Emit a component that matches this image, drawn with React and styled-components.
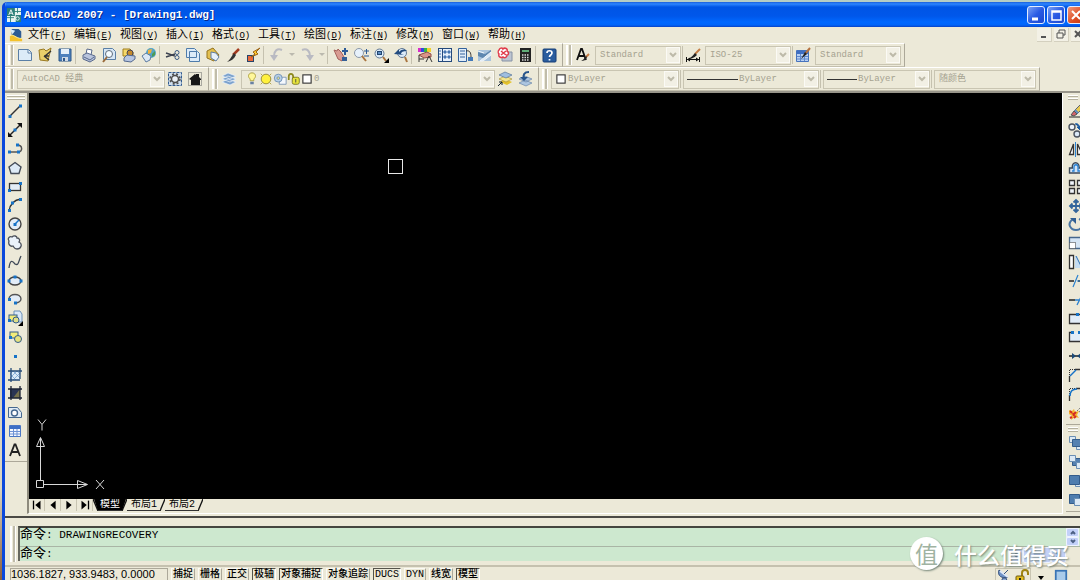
import styled, { createGlobalStyle, css } from "styled-components"

const icons = {
    app: <><rect width="16" height="16" fill="#e8f4f0"/><path d="M0 0h9v9H0zM10 8h6v8h-6z" fill="#2c7f78"/><path d="M2 8l2.500-6 2.500 6M3 6h3" stroke="#fff" fill="none"/><path d="M0 11h8M8 4h8M4 9v7M12 0v6" stroke="#2c7f78"/><circle cx="12" cy="12" r="2" fill="none" stroke="#fff"/></>,
    dwg: <><path d="M3 1h8l3 3v9H3z" fill="#2d5c93"/><path d="M1 1l6 2-3 4z" fill="#d8ecf8"/><path d="M1 9c4-4 6 3 14 3v3H1z" fill="#f4c22c"/><path d="M1 9c4-3 6 3 14 3" stroke="#fff3a8" fill="none"/></>,
    new: <><path d="M1.500 2.500h10l3 3v8h-13z" fill="#dcebf8" stroke="#5a7fa6"/><path d="M11 3v3h3" fill="#fff" stroke="#5a7fa6"/></>,
    open: <><path d="M2 3l5-1 2 2 5-3-3 13-8-1z" fill="#e9cf6a" stroke="#9a7a22"/><path d="M8 9l6-5M7 9l5 4M7 9h5" stroke="#333" strokeWidth="1.500"/></>,
    save: <><path d="M2 2h12v12H2z" fill="#4f81bd" stroke="#2d5688"/><path d="M4 2h8v5H4z" fill="#e6f0fa"/><path d="M5 10h6v4H5z" fill="#cfd9e6"/><path d="M6 11h2v3H6z" fill="#2d5688"/></>,
    print: <><path d="M5 7l1-5 5 1-1 5" fill="#fff" stroke="#59698c"/><path d="M2 8l4-2 8 3v3l-5 3-7-3z" fill="#b9c4dd" stroke="#59698c"/><path d="M3 10l6 3 4-3" stroke="#59698c" fill="none"/></>,
    preview: <><path d="M2.500 1.500h9l3 3v8h-12z" fill="#d7e7f6" stroke="#5a7fa6"/><circle cx="8" cy="7" r="3.500" fill="#f5fbff" stroke="#5c6b7c"/><path d="M6 10l-4 5" stroke="#9a6a3a" strokeWidth="2"/></>,
    publish: <><path d="M2 2h7l3 3v4H2z" fill="#f5d96a" stroke="#a07c1c"/><circle cx="9" cy="6" r="3" fill="#c58a2c" stroke="#445"/><path d="M3 11l3-3 8 1v3l-4 3-7-1z" fill="#b7c6e2" stroke="#54698f"/></>,
    globe: <><circle cx="10" cy="6" r="5" fill="#54a4c6"/><path d="M7 3l4-1-1 4-3 1z" fill="#f4b13c"/><path d="M11 7l3-3v4l-3 2z" fill="#4e9b50"/><path d="M1 9l4-3 5 3-1 4-4 2z" fill="#dce8f5" stroke="#5c7ba0"/></>,
    cut: <><path d="M1 6l9 3M1 10l9-3" stroke="#3c4250" strokeWidth="1.500"/><circle cx="12" cy="5.500" r="2" fill="none" stroke="#3c5a84"/><circle cx="12" cy="10.500" r="2" fill="none" stroke="#3c5a84"/></>,
    copy: <path d="M1.500 1.500h8l2 2v7h-10zM4.500 4.500h8l2 2v8h-10z" fill="#dcebf8" stroke="#4f7cab"/>,
    paste: <><path d="M2 4l6-3 6 7-5 6-7-3z" fill="#e3c050" stroke="#94721d"/><path d="M6 5l5 1 3 4-3 4-5-3z" fill="#e7f0fb" stroke="#5f7da4"/></>,
    brush: <><path d="M14 2L8 8" stroke="#a33a20" strokeWidth="2.500"/><path d="M9 6l2 2c-2 4-5 6-9 7 3-2 4-5 7-9z" fill="#333"/></>,
    blockEdit: <><rect x="2.500" y="8.500" width="6" height="6" fill="#e8683c" stroke="#26456b"/><path d="M15 1L8 5l2 2-4 3 7-3-2-2z" fill="#ffcb2d" stroke="#9a641a"/></>,
    undo: <><path d="M13 3c-5-2-8 1-8 6" fill="none" stroke="#b9bac2" strokeWidth="2"/><path d="M1 8h8l-4 6z" fill="#b9bac2"/></>,
    redo: <><path d="M3 3c5-2 8 1 8 6" fill="none" stroke="#b9bac2" strokeWidth="2"/><path d="M7 8h8l-4 6z" fill="#b9bac2"/></>,
    pan: <><path d="M1 3l3 1 1-2 3 3 3 5-2 4-4-2z" fill="#d99b92" stroke="#a4605b"/><path d="M12 1v7M9 4h6" stroke="#2d5b97" strokeWidth="2"/><path d="M9 10h5v4H9z" fill="#355f97"/></>,
    zoomRt: <><circle cx="6" cy="6" r="4.500" fill="#e7f1fb" stroke="#8a97a8"/><path d="M9 9l4 5" stroke="#a9743f" strokeWidth="2"/><path d="M11 4h5M13.500 2v5M11 9h5" stroke="#2d5b97"/></>,
    zoomWin: <><circle cx="6.500" cy="6.500" r="4.500" fill="#dcebf9" stroke="#637892"/><rect x="4.500" y="4.500" width="4" height="3" fill="#5f8dc1" stroke="#23466f"/><path d="M10 10l3 4" stroke="#a9743f" strokeWidth="2"/><path d="M16 11v5h-5z" fill="#000"/></>,
    zoomPrev: <><circle cx="9" cy="6" r="4.500" fill="#dcebf9" stroke="#637892"/><path d="M12 10l2 5" stroke="#a9743f" strokeWidth="2"/><path d="M1 7l5-5v3c3-3 6-3 8-1-4 0-6 1-6 3l3 1z" fill="#234c80"/></>,
    properties: <><path d="M1 1h3v4H1z" fill="#d72ec8"/><path d="M4 1h3v4H4z" fill="#3249dc"/><path d="M7 1h3v4H7z" fill="#32b64c"/><path d="M10 1h4v4h-4z" fill="#f2d12d"/><path d="M2 8l8-3 4 2v3l-7 1z" fill="#db9488" stroke="#8d4c46"/><path d="M2 8v7M2 12h5M9 15l3-6 3 6" stroke="#333" fill="none"/></>,
    design: <><rect x="1.500" y="1.500" width="13" height="13" fill="#e7f0fa" stroke="#24497c"/><path d="M5.500 2v12" stroke="#24497c"/><path d="M2 4h2M2 7h2M2 10h2M7 4h2v2H7zM11 4h2v2h-2zM7 9h2v2H7zM11 9h2v2h-2z" stroke="#3669a8" fill="#7ba1cd"/></>,
    palette: <><path d="M1.500 1.500h8v13h-8z" fill="#e0ecf8" stroke="#34629c"/><path d="M3 4h5M3 7h5M3 10h5" stroke="#34629c"/><path d="M9 4c4-1 5 2 5 6" fill="none" stroke="#333"/><path d="M11 10h5v4h-5z" fill="#4379b9"/></>,
    sheet: <><path d="M1 3h13v11H1z" fill="#a9c3dc"/><path d="M1 5l7 2 6-4v3l-6 6-7-3z" fill="#5e87b0"/><path d="M1 4l6 2M3 14l11-9v3l-8 6z" fill="#dbe8f3" stroke="#edf4fb"/></>,
    markup: <><path d="M5 5h10v9H5z" fill="#bdc5d2" stroke="#8692a5"/><path d="M2 3c1-3 4-2 4-1 2-2 5 0 4 2 2 1 2 4 0 4 0 3-3 3-4 2-2 1-5 0-4-3-1-1-1-3 0-4z" fill="#fff" stroke="#e13b4b" strokeWidth="1.500"/><path d="M4 4l5 4M9 4L4 8" stroke="#e13b4b" strokeWidth="1.500"/></>,
    calc: <><rect x="3" y="1" width="11" height="14" fill="#222"/><path d="M5 3h7v2H5z" fill="#62ad79"/><path d="M5 8h7M5 10.500h7M5 13h7" stroke="#dadada" strokeWidth="1.500" strokeDasharray="1.500 1"/></>,
    help: <><rect x="2" y="2" width="13" height="13" rx="1" fill="#2a5d9e" stroke="#163e76"/><path d="M6 6c0-3 5-3 5 0 0 2-2.500 2-2.500 4M8.500 12v1.500" fill="none" stroke="#fff" strokeWidth="1.700"/></>,
    textStyle: <><path d="M2 13L6 2h1l4 11M4 9h5" fill="none" stroke="#111" strokeWidth="1.800"/><path d="M14 7l-3 3" stroke="#c97c44" strokeWidth="2"/><path d="M11 9l1 1c-1 3-3 4-6 4 3-1 3-3 5-5z" fill="#222"/></>,
    dimStyle: <><path d="M15 2l-5 5" stroke="#c47c45" strokeWidth="2"/><path d="M10 6l2 2c-3 3-6 4-11 5 4-2 6-3 9-7z" fill="#222"/><path d="M1.500 10v5M14.500 10v5M2 12.500h12" stroke="#111"/><path d="M2 12.500l3-2v4zM14 12.500l-3-2v4z" fill="#111"/></>,
    tableStyle: <><path d="M1.500 3.500h12v11h-12z" fill="#b9d0f2" stroke="#4673bd"/><path d="M2 4h11v3H2z" fill="#3f6fc2"/><path d="M2 9.500h11M2 12h11M5.500 7v7M9.500 7v7" stroke="#5f88cc"/><path d="M15 1l-5 6" stroke="#b4713f" strokeWidth="2"/><path d="M10 5l2 2-6 5z" fill="#222"/></>,
    gear: <><path d="M1.500 1.500h13v13h-13z" fill="#cfdeee" stroke="#315b91" strokeDasharray="3 1"/><circle cx="8" cy="8" r="3.500" fill="#e9eff5" stroke="#4c4c4c" strokeWidth="1.500"/><circle cx="8" cy="8" r="5" fill="none" stroke="#4c4c4c" strokeWidth="1.500" strokeDasharray="2 2"/></>,
    home: <><path d="M1.500 1.500h13v13h-13z" fill="none" stroke="#666" strokeDasharray="1 1"/><path d="M2 8l6-5 1 1V3h3v3l2 2v1h-1v5H4V9z" fill="#171717"/></>,
    layers: <path d="M1 11l6-3 8 3-6 3zM1 8l6-3 8 3-6 3zM1 5l6-3 8 3-6 3z" fill="#7ba1cc" stroke="#eef5fc" strokeWidth=".7"/>,
    bulb: <><path d="M8 1c4 0 5 4 3 6-1 1-1 2-1 3H6c0-1 0-2-1-3C3 5 4 1 8 1z" fill="#fff79a" stroke="#a99b36"/><path d="M6 11h4v3H6z" fill="#6881a4"/></>,
    sun: <><circle cx="8" cy="8" r="5.500" fill="#fff13d" stroke="#8f8434"/><path d="M2 2l2 2M14 2l-2 2M2 14l2-2M14 14l-2-2" stroke="#a99b3a"/></>,
    freeze: <><path d="M8 6h7v8H7z" fill="#f4f8fd" stroke="#7c95b4"/><circle cx="6" cy="7" r="4.500" fill="#b8d0e6" stroke="#6d8fb5"/><circle cx="6" cy="7" r="1.500" fill="#f0e88a" stroke="#6d8fb5"/></>,
    lock: <><path d="M2 9V5c0-4 5-4 5 0v3" stroke="#8e8a21" strokeWidth="2" fill="none"/><rect x="6" y="6" width="8" height="8" rx="2" fill="#e7e43d" stroke="#77741f"/><path d="M10 8v4" stroke="#444"/></>,
    swatch: <rect x="2.500" y="2.500" width="11" height="11" fill="#fff" stroke="#333" strokeWidth="1.500"/>,
    layerCurrent: <><path d="M3 11l5-3 7 3-5 3z" fill="#e4c22b"/><path d="M2 8l6-3 7 3-6 3z" fill="#f4e58b" stroke="#a08a31" strokeWidth=".6"/><path d="M2 4l6-3 7 3-6 3z" fill="#9fbedf" stroke="#45678e" strokeWidth=".6"/><path d="M1 15l4-4M2 11h3v3" stroke="#123" fill="none"/></>,
    layerPrev: <><path d="M2 12l6-3 7 3-6 3zM2 8l6-3 7 3-6 3z" fill="#acc5e0" stroke="#5c7ba1" strokeWidth=".6"/><path d="M12 1C7 1 6 4 7 7" fill="none" stroke="#28558c" strokeWidth="2"/><path d="M3 6l4 4 4-4z" fill="#28558c"/></>,
    line: <><path d="M3 13L13 3" stroke="#333" strokeWidth="1.500"/><path d="M1.500 12h3v3h-3zM12 1.500h3v3h-3z" fill="#1673c7"/></>,
    xline: <><path d="M2 14L14 2" stroke="#222" strokeWidth="1.500"/><path d="M1 15v-5l5 5zM15 1v5l-5-5z" fill="#111"/><path d="M6.500 6.500h3v3h-3z" fill="#1673c7"/></>,
    pline: <><path d="M3 11h8M10 4c6 0 6 7 1 7" fill="none" stroke="#555" strokeWidth="1.500"/><path d="M1 9.500h3v3H1zM9 2.500h3v3H9zM10 9.500h3v3h-3z" fill="#1673c7"/></>,
    polygon: <path d="M8 2.500l6 4.500-2 6.500H4L2 7z" fill="#deebf7" stroke="#454d59" strokeWidth="1.400"/>,
    rect: <><rect x="2.500" y="4.500" width="11" height="7" fill="#e3edf7" stroke="#333" strokeWidth="1.300"/><path d="M1 10h3v3H1zM12 3h3v3h-3z" fill="#1673c7"/></>,
    arc: <><path d="M2 14C3 7 7 3 14 2" fill="none" stroke="#333" strokeWidth="1.300"/><path d="M1 12h3v3H1zM4 4.500h3v3H4zM12 1h3v3h-3z" fill="#1673c7"/></>,
    circle: <><circle cx="8" cy="8" r="6" fill="#e3edf7" stroke="#444" strokeWidth="1.400"/><path d="M8 8l4-4" stroke="#1673c7" strokeWidth="1.500"/><path d="M6.500 7h3v3h-3z" fill="#1673c7"/></>,
    cloud: <path d="M2 6c-2-3 1-5 3-4 2-2 5-1 5 1 3 0 3 3 2 4 4 2 2 7-2 7-3 0-3-2-4-3-3 1-5-2-4-5z" fill="#eaf2fa" stroke="#4c525c" strokeWidth="1.300"/>,
    spline: <path d="M2 14c1-8 3-8 6-4 4 2 3-2 6-8" fill="none" stroke="#3d4856" strokeWidth="1.300"/>,
    ellipse: <><ellipse cx="8" cy="8" rx="6" ry="4" fill="#e3edf7" stroke="#444" strokeWidth="1.400"/><path d="M0.500 6.500h3v3h-3zM12.500 6.500h3v3h-3zM6.500 2.500h3v3h-3z" fill="#1673c7"/></>,
    ellipseArc: <><path d="M2 8c0-6 12-6 12 0 0 3-4 4-6 4" fill="#e3edf7" stroke="#555" strokeWidth="1.400"/><path d="M1 7h3v3H1zM7 10.500h3v3H7z" fill="#1673c7"/></>,
    insert: <><path d="M7 1h6l2 3v8H7z" fill="#d9e9f8" stroke="#6c91b9"/><rect x="2" y="5" width="8" height="6" fill="#f2ec79" stroke="#335c8a"/><circle cx="9" cy="10" r="3" fill="#dede88" stroke="#335c8a"/><path d="M1 9h3v3H1z" fill="#1673c7"/><path d="M16 11v5h-5z"/></>,
    block: <><rect x="3" y="3" width="8" height="6" fill="#f2ec79" stroke="#335c8a"/><circle cx="11" cy="10" r="3.500" fill="#e5e27f" stroke="#335c8a"/><path d="M2 7h3v3H2z" fill="#1673c7"/></>,
    point: <path d="M7 7h3v3H7z" fill="#1673c7"/>,
    hatch: <><rect x="3" y="4" width="10" height="9" fill="#dcebf8"/><path d="M3 7l6 6M3 11l2 2M6 4l7 7M10 4l3 3M3 7l3-3M3 11l7-7M6 13l7-7" stroke="#6a9acb" strokeWidth=".7"/><path d="M1 4h14M1 13h12M4 1v14M13 1v11" stroke="#264c78" strokeWidth="1.300"/></>,
    gradient: <><path d="M3 4h10v9H3z" fill="#293454"/><path d="M13 4v9H6z" fill="#75714c"/><path d="M1 4h14M1 13h14M4 1v14M13 1v14" stroke="#1c2435" strokeWidth="1.300"/></>,
    region: <><path d="M1.500 3.500h9l4 5v5h-13z" fill="#e0ebf5" stroke="#45688f"/><circle cx="7.500" cy="9" r="3" fill="#fff" stroke="#45688f" strokeWidth="1.400"/></>,
    table: <><path d="M2.500 2.500h11v11h-11z" fill="#f4f8ff" stroke="#4a77c4"/><path d="M3 3h10v3H3z" fill="#3d6fc6"/><path d="M3 8.500h10M3 11h10M6.500 6v7M10 6v7" stroke="#6d92d4"/></>,
    mtext: <path d="M3 14L7.500 2.500h1L13 14M4.500 10h7" fill="none" stroke="#222" strokeWidth="1.800"/>,
    erase: <><path d="M1 14h14" stroke="#222"/><path d="M4 12l3-5 6-6 3 3-7 7z" fill="#e8c952" stroke="#5d6470"/><path d="M3 12l3-4 3 3-3 2z" fill="#d3636b" stroke="#555"/><path d="M7 7l3 3" stroke="#5c8cc6" strokeWidth="2"/></>,
    copyObj: <><circle cx="4" cy="5" r="3" fill="#eef5fc" stroke="#4b535f" strokeWidth="1.400"/><circle cx="9" cy="12" r="3" fill="#dbe9f7" stroke="#4b535f" strokeWidth="1.400"/><path d="M7 2c3-1 4 1 5 4M9 5h5l-2 3z" fill="#1b5a9f" stroke="#1b5a9f"/></>,
    mirror: <><path d="M1.500 13.500h4V3zM9.500 13.500h5L9.500 3z" fill="#fff" stroke="#333" strokeWidth="1.300"/><path d="M7.500 1v15" stroke="#2a83d4"/></>,
    offset: <><path d="M1.500 13V8h3C3 1 12 1 11 8h4v5z" fill="#d3e4f5" stroke="#3c4a5b" strokeWidth="1.400"/><path d="M4 11h2V7c0-3 4-3 4 0v4h5" fill="none" stroke="#2a83d4" strokeWidth="1.300"/></>,
    array: <path d="M1.500 1.500h5v5h-5zM9.500 1.500h5v5h-5zM1.500 9.500h5v5h-5zM9.500 9.500h5v5h-5z" fill="#f1f6fc" stroke="#333" strokeWidth="1.300"/>,
    move: <path d="M8 2v12M2 8h12M5.500 4.500L8 2l2.500 2.500M5.500 11.500L8 14l2.500-2.500M4.500 5.500L2 8l2.500 2.500M11.500 5.500L14 8l-2.500 2.500" fill="none" stroke="#34669c" strokeWidth="1.800"/>,
    rotate: <><path d="M5 3c-7 5-2 11 3 11 7 0 8-9 3-11" fill="none" stroke="#4975a3" strokeWidth="2"/><path d="M2 2h6v6z" fill="#315f94"/></>,
    scale: <><path d="M1.500 2.500h14v11h-14z" fill="#d5e5f4" stroke="#45678d" strokeWidth="1.300"/><path d="M1.500 7.500h6v6h-6z" fill="#fff" stroke="#333" strokeDasharray="1 1"/></>,
    stretch: <><path d="M1.500 1.500h4v13h-4z" fill="#fff" stroke="#333" strokeWidth="1.300"/><path d="M7 2h2l5 12H7z" fill="#c5dcf2"/><path d="M8 2l6 12" stroke="#3273b1"/><path d="M5.500 2v12" stroke="#333" strokeDasharray="2 1"/></>,
    trim: <><path d="M1 8h5M10 8h2M13 8h2" stroke="#222" strokeWidth="1.300"/><path d="M5 14L10 2M9 8h6" stroke="#2b82cf" strokeWidth="1.200"/></>,
    extend: <><path d="M1 8h6" stroke="#222" strokeWidth="1.500"/><path d="M7 8h4M9 13l4-8 3-1" stroke="#2b82cf" strokeWidth="1.300" fill="none"/></>,
    breakAt: <><path d="M1.500 3.500h14v9h-14z" fill="#e2edf8" stroke="#333" strokeWidth="1.300"/><path d="M8 2h3v3H8z" fill="#1673c7"/></>,
    break: <><path d="M4 3.500H1.500v9h14v-9H12" fill="#e2edf8" stroke="#333" strokeWidth="1.300"/><path d="M3 2h3v3H3zM10 2h3v3h-3z" fill="#1673c7"/></>,
    join: <><path d="M1 8h14" stroke="#222" strokeWidth="1.500"/><path d="M4 5l4 3-4 3zM13 5L9 8l4 3z" fill="#1b4a79"/></>,
    chamfer: <><path d="M1.500 15V9M7 2.500h8" stroke="#333" strokeWidth="1.300"/><path d="M1.500 8V2.500H7" fill="none" stroke="#333" strokeDasharray="1 1"/><path d="M2 9l6-6" stroke="#1673c7" strokeWidth="1.500"/></>,
    fillet: <><path d="M1.500 15V9M8 2.500h7" stroke="#333" strokeWidth="1.300"/><path d="M1.500 8V2.500H7" fill="none" stroke="#333" strokeDasharray="1 1"/><path d="M2 10c0-5 3-7 7-7" fill="none" stroke="#1673c7" strokeWidth="1.500"/></>,
    explode: <><path d="M1 5l3 1 2-2 1 3 4-1-2 4 2 3-4-1-4 3 1-4-3-2z" fill="#f4b62b"/><path d="M2 6l2 2M8 11l-2 2M8 7L6 9M2 13l2-1M5 8l1 3" stroke="#d42a22" strokeWidth="2"/><path d="M9 6l5-5M11 7l4-3" stroke="#777" strokeDasharray="2 1"/></>,
    front: <><path d="M1.500 1.500h6v6h-6zM8.500 8.500h6v6h-6z" fill="#dce9f5" stroke="#6b8fb4"/><path d="M4.500 4.500h8v7h-8z" fill="#5581b1" stroke="#345c8a"/></>,
    back: <><path d="M4.500 4.500h8v7h-8z" fill="#5581b1" stroke="#345c8a"/><path d="M1.500 1.500h6v6h-6zM8.500 8.500h6v6h-6z" fill="#dce9f5" stroke="#6b8fb4"/></>,
    above: <><path d="M7.500 7.500h7v6h-7z" fill="#dce9f5" stroke="#6b8fb4"/><path d="M1.500 2.500h10v9h-10z" fill="#4f7dae" stroke="#345c8a"/></>,
    under: <><path d="M1.500 2.500h10v9h-10z" fill="#4f7dae" stroke="#345c8a"/><path d="M6.500 6.500h8v7h-8z" fill="#dce9f5" stroke="#6b8fb4"/></>,
    dish: <><path d="M3 1c-2 6 3 9 9 7z" fill="#6f92c6" stroke="#35527f"/><path d="M4 2l8 6" stroke="#dfe9f7" strokeWidth="2"/><path d="M8 5l4-4" stroke="#35527f"/><path d="M7 9l-3 5h8l-2-5z" fill="#8ea9d2" stroke="#35527f"/></>,
    goldLock: <><path d="M8 8V4c0-4 6-4 6 0v2" fill="none" stroke="#a08312" strokeWidth="2"/><rect x="2" y="7" width="8" height="8" rx="1" fill="#e3be1e" stroke="#6f5a10"/><path d="M6 9v4" stroke="#222" strokeWidth="2"/></>,
    screen: <><rect x="1" y="1" width="14" height="14" fill="#3974b5"/><path d="M3 3h10v10H3z" fill="#a9cbea"/></>,
    first: <><path d="M4 3v10" stroke="#000" strokeWidth="1.500"/><path d="M12 3v10L6 8z"/></>,
    prev: <path d="M11 3v10L5 8z"/>,
    next: <path d="M5 3v10l6-5z"/>,
    last: <><path d="M12 3v10" stroke="#000" strokeWidth="1.500"/><path d="M4 3v10l6-5z"/></>,
}

const standardTools = [
    ["new", "open", "save"],
    ["print", "preview", "publish", "globe"],
    ["cut", "copy", "paste", "brush", "blockEdit"],
    ["undo", "drop", "redo", "drop"],
    ["pan", "zoomRt", "zoomWin", "zoomPrev"],
    ["properties", "design", "palette", "sheet", "markup", "calc"],
    ["help"],
]

const drawTools = ["line", "xline", "pline", "polygon", "rect", "arc", "circle", "cloud", "spline", "ellipse", "ellipseArc", "insert", "block", "point", "hatch", "gradient", "region", "table", "mtext"]
const modifyTools = ["erase", "copyObj", "mirror", "offset", "array", "move", "rotate", "scale", "stretch", "trim", "extend", "breakAt", "break", "join", "chamfer", "fillet", "explode"]
const orderTools = ["front", "back", "above", "under"]

const menus = [["文件", "F"], ["编辑", "E"], ["视图", "V"], ["插入", "I"], ["格式", "O"], ["工具", "T"], ["绘图", "D"], ["标注", "N"], ["修改", "M"], ["窗口", "W"], ["帮助", "H"]]

const modes = [["捕捉"], ["栅格"], ["正交"], ["极轴", true], ["对象捕捉", true], ["对象追踪"], ["DUCS", true], ["DYN"], ["线宽"], ["模型", true]]

const Icon = ({ name, size = 16 }) => (
    <StyledIcon viewBox="0 0 16 16" width={size} height={size} aria-hidden="true">{icons[name]}</StyledIcon>
)

const Tool = ({ name }) => (
    <ToolBtn type="button" aria-label={name}><Icon name={name}/></ToolBtn>
)

const Combo = ({ label, value, width, children }) => (
    <ComboBox $width={width}>
        {children}
        <select aria-label={label} defaultValue={value}>
            <option>{value}</option>
        </select>
        <Arrow>
            <svg width="8" height="6" viewBox="0 0 8 6"><path d="M1 1l3 3 3-3" fill="none" stroke="#bdbaa9" strokeWidth="2"/></svg>
        </Arrow>
    </ComboBox>
)

const LineSample = ({ width }) => (
    <svg width={width} height="1"><path d={`M0 .5h${width}`} stroke="#333"/></svg>
)

const Slash = ({ back }) => (
    <SlashMark width="5" height="12" viewBox="0 0 5 12">
        <path d={back ? "M0 0l5 12" : "M5 0L0 12"} stroke="#111" strokeWidth="1.300"/>
    </SlashMark>
)

const TitleBar = () => (
    <StyledTitleBar>
        <Icon name="app" size={14}/>
        <h1>AutoCAD 2007 - [Drawing1.dwg]</h1>
        <CaptionBtn type="button" aria-label="最小化">
            <svg width="16" height="16"><path d="M4 12h6" stroke="#fff" strokeWidth="3"/></svg>
        </CaptionBtn>
        <CaptionBtn type="button" aria-label="最大化">
            <svg width="16" height="16"><path d="M4 4h9v9H4zM4 5h9" fill="none" stroke="#fff" strokeWidth="1.500"/></svg>
        </CaptionBtn>
        <CaptionBtn type="button" aria-label="关闭" $close>
            <svg width="16" height="16"><path d="M4 4l8 8M12 4l-8 8" stroke="#fff" strokeWidth="2"/></svg>
        </CaptionBtn>
    </StyledTitleBar>
)

const MenuBar = () => (
    <StyledMenuBar>
        <Icon name="dwg" size={14}/>
        {menus.map(([text, key]) => (
            <MenuBtn type="button" key={key}>{text}<span>(<u>{key}</u>)</span></MenuBtn>
        ))}
        <ChildBtns>
            <button type="button" aria-label="最小化窗口"><svg width="12" height="12"><path d="M3 9h5" stroke="#555" strokeWidth="2"/></svg></button>
            <button type="button" aria-label="还原窗口"><svg width="12" height="12"><path d="M2 5h6v5H2zM4 5V2h6v5H8" fill="none" stroke="#555"/></svg></button>
            <button type="button" aria-label="关闭窗口"><svg width="12" height="12"><path d="M3 3l6 6M9 3L3 9" stroke="#555" strokeWidth="2"/></svg></button>
        </ChildBtns>
    </StyledMenuBar>
)

const ToolRows = () => (
    <>
        <ToolRow>
            <ToolBar>
                <Grip/>
                {standardTools.map((group, i) => (
                    <Group key={i}>
                        {group.map((name, j) => name === "drop"
                            ? <DropBtn type="button" aria-label="历史" key={j}><svg width="6" height="4"><path d="M0 0h6L3 3z" fill="#bbb9ae"/></svg></DropBtn>
                            : <Tool name={name} key={name}/>)}
                    </Group>
                ))}
            </ToolBar>
            <ToolBar>
                <Grip/>
                <Tool name="textStyle"/>
                <Combo label="文字样式" value="Standard" width={86}/>
                <Divider/>
                <Tool name="dimStyle"/>
                <Combo label="标注样式" value="ISO-25" width={86}/>
                <Divider/>
                <Tool name="tableStyle"/>
                <Combo label="表格样式" value="Standard" width={86}/>
            </ToolBar>
        </ToolRow>
        <ToolRow>
            <ToolBar>
                <Grip/>
                <Combo label="工作空间" value="AutoCAD 经典" width={148}/>
                <Tool name="gear"/>
                <Tool name="home"/>
            </ToolBar>
            <ToolBar>
                <Grip/>
                <Tool name="layers"/>
                <Combo label="图层" value="0" width={254}>
                    <Icon name="bulb" size={14}/>
                    <Icon name="sun" size={14}/>
                    <Icon name="freeze" size={14}/>
                    <Icon name="lock" size={14}/>
                    <Icon name="swatch" size={12}/>
                </Combo>
                <Tool name="layerCurrent"/>
                <Tool name="layerPrev"/>
            </ToolBar>
            <ToolBar>
                <Grip/>
                <Combo label="颜色" value="ByLayer" width={128}><Icon name="swatch" size={12}/></Combo>
                <Divider/>
                <Combo label="线型" value="ByLayer" width={136}><LineSample width={51}/></Combo>
                <Divider/>
                <Combo label="线宽" value="ByLayer" width={107}><LineSample width={30}/></Combo>
                <Divider/>
                <Combo label="打印样式" value="随颜色" width={102}/>
            </ToolBar>
        </ToolRow>
    </>
)

const ModelSpace = () => (
    <StyledModelSpace>
        <Drawing>
            <PickBox/>
            <UcsIcon width="80" height="80" viewBox="1 1 80 80" aria-hidden="true">
                <g fill="none" stroke="#d8d8d8">
                    <path d="M8.500 62.500h7v7h-7zM12.500 62V20M16 66.500h40"/>
                    <path d="M12.500 19.500l-4 9h8zM12.500 20v9M59.500 66.500l-10-4v8zM50 66.500h9"/>
                    <path d="M10 1.500l4 5 4-5M14 6.500v6M68 62l8 9M76 62l-8 9"/>
                </g>
            </UcsIcon>
        </Drawing>
        <TabBar>
            {["first", "prev", "next", "last"].map(name => (
                <NavBtn type="button" aria-label={name} key={name}><Icon name={name} size={14}/></NavBtn>
            ))}
            <Slash back/>
            <TabBtn type="button" $active>模型</TabBtn>
            <Slash/>
            <TabBtn type="button">布局1</TabBtn>
            <Slash/>
            <TabBtn type="button">布局2</TabBtn>
            <Slash/>
        </TabBar>
    </StyledModelSpace>
)

const CommandPanel = () => (
    <StyledCommandPanel>
        <Grip/>
        <CommandBox>
            <History>
                <p><span>命令</span>: DRAWINGRECOVERY</p>
                <Scroller>
                    <ScrollBtn type="button" aria-label="向上"><svg width="8" height="5"><path d="M2 4l2-2 2 2" fill="none" stroke="#4d6185" strokeWidth="2"/></svg></ScrollBtn>
                    <ScrollBtn type="button" aria-label="向下"><svg width="8" height="5"><path d="M2 1l2 2 2-2" fill="none" stroke="#4d6185" strokeWidth="2"/></svg></ScrollBtn>
                </Scroller>
            </History>
            <Prompt>
                <label htmlFor="command"><span>命令</span>:</label>
                <input id="command" type="text"/>
                <HScroller>
                    <ScrollBtn type="button" aria-label="向左"><svg width="5" height="8"><path d="M4 2L2 4l2 2" fill="none" stroke="#4d6185" strokeWidth="2"/></svg></ScrollBtn>
                    <ScrollBtn type="button" aria-label="滚动块"><svg width="8" height="8"><path d="M2 2v4M4 2v4M6 2v4" stroke="#8fa6dc"/></svg></ScrollBtn>
                    <ScrollBtn type="button" aria-label="向右"><svg width="5" height="8"><path d="M1 2l2 2-2 2" fill="none" stroke="#4d6185" strokeWidth="2"/></svg></ScrollBtn>
                </HScroller>
            </Prompt>
        </CommandBox>
    </StyledCommandPanel>
)

const StatusBar = () => (
    <StyledStatusBar>
        <Coords>1036.1827, 933.9483, 0.0000</Coords>
        {modes.map(([text, on]) => (
            <ModeBtn type="button" key={text} $on={on} aria-pressed={!!on}>{text}</ModeBtn>
        ))}
        <Tray>
            <Icon name="dish"/>
            <Icon name="goldLock"/>
        </Tray>
        <svg width="8" height="5"><path d="M1 0h6L4 4z"/></svg>
        <Icon name="screen" size={14}/>
    </StyledStatusBar>
)

const Watermark = () => (
    <StyledWatermark>
        <span>值</span>
        <p>什么值得买</p>
    </StyledWatermark>
)

const App = () => {
    return (
        <Desktop>
            <GlobalStyle/>
            <Frame>
                <TitleBar/>
                <MenuBar/>
                <ToolRows/>
                <Workspace>
                    <SideColumn>
                        <SideBar>
                            <SideGrip/>
                            <SideTools $height={357}>{drawTools.map(name => <Tool name={name} key={name}/>)}</SideTools>
                        </SideBar>
                    </SideColumn>
                    <ModelSpace/>
                    <SideColumn $right>
                        <SideBar>
                            <SideGrip/>
                            <SideTools $height={320}>{modifyTools.map(name => <Tool name={name} key={name}/>)}</SideTools>
                        </SideBar>
                        <SideBar>
                            <SideGrip/>
                            <SideTools $height={75}>{orderTools.map(name => <Tool name={name} key={name}/>)}</SideTools>
                        </SideBar>
                    </SideColumn>
                </Workspace>
                <CommandPanel/>
                <StatusBar/>
            </Frame>
            <Watermark/>
        </Desktop>
    )
}

export default App

const GlobalStyle = createGlobalStyle`
    *{
        box-sizing: border-box;
        margin: 0;
        padding: 0;
    }

    body{
        overflow: hidden;
        font-family: "Liberation Mono", "Noto Sans CJK SC", monospace;
        font-size: 11px;
        color: #000;
    }

    button,input,select{
        border: none;
        border-radius: 0;
        background: none;
        font: inherit;
        color: inherit;
    }
`

const Desktop = styled.div`
    position: relative;
    height: 100vh;
    padding: 2px 0px 0px 2px;
    overflow: hidden;
    background: linear-gradient(to bottom, #b5cdc4, #d9d5c3 30px, #d9d5c3 84%, #8c5e3c);
`

const Frame = styled.main`
    display: flex;
    flex-direction: column;
    height: 100%;
    border-left: 3px solid #0a48dc;
    border-top-left-radius: 5px;
    background-color: #ece9d8;
    overflow: hidden;
`

const StyledIcon = styled.svg`
    display: block;
    flex: none;
`

const StyledTitleBar = styled.header`
    display: flex;
    align-items: center;
    flex: none;
    height: 25px;
    padding-left: 2px;
    background: linear-gradient(to bottom, #1a5fdc, #2d86ff 2px, #0055e5 5px, #0057ea 14px, #0068ff 20px, #0065fa 23px, #0a42c4);

    h1{
        flex: 1;
        padding-left: 3px;
        font-size: 11px;
        font-weight: bold;
        color: #fff;
        text-shadow: 1px 1px #06298c;
    }
`

const CaptionBtn = styled.button`
    display: flex;
    flex: none;
    width: 18px;
    height: 18px;
    margin-right: 2px;
    border: 1px solid #e2ecff;
    border-radius: 3px;
    background: ${({ $close }) => $close
        ? "linear-gradient(135deg, #f09a7c, #dd4b22 60%, #c63a12)"
        : "linear-gradient(135deg, #7ba2f5, #2a5be4 50%, #1c46cf)"};

    &:last-child{
        margin-right: -5px;
    }
`

const StyledMenuBar = styled.nav`
    display: flex;
    align-items: center;
    flex: none;
    height: 16px;
    padding-left: 4px;
`

const MenuBtn = styled.button`
    width: 46px;
    padding-left: 5px;
    font-size: 11px;
    line-height: 16px;
    text-align: left;
    white-space: nowrap;

    span{
        font-size: 9px;
    }
`

const ChildBtns = styled.div`
    display: flex;
    gap: 2px;
    margin: 0px -6px 0px auto;

    button{
        width: 15px;
        height: 14px;
        border-right: 1px solid #d4d0bf;
        border-bottom: 1px solid #d4d0bf;
        background-color: #f3f1e6;
    }
`

const ToolRow = styled.div`
    display: flex;
    flex: none;
    height: 24px;
    margin-right: 2px;
`

const ToolBar = styled.div`
    display: flex;
    align-items: center;
    flex: none;
    padding: 0px 3px;
    border-top: 1px solid #fff;
    border-right: 1px solid #aca899;
    border-bottom: 1px solid #c3bfad;
`

const Grip = styled.div`
    flex: none;
    width: 5px;
    height: 20px;
    margin-right: 2px;
    border: 0px solid #fff;
    border-width: 0px 2px;
    border-right-color: #c0bcaa;
    box-shadow: 1px 0px #fff;
`

const SideGrip = styled.div`
    height: 5px;
    margin: 2px 2px;
    border-top: 1px solid #fff;
    border-bottom: 1px solid #b5b19f;
    background: linear-gradient(to bottom, #b5b19f 1px, #ece9d8 1px, #ece9d8 2px, #fff 2px);
`

const Group = styled.div`
    display: flex;
    align-items: center;

    & + &{
        padding-left: 3px;
        border-left: 1px solid #c5c1af;
    }
`

const ToolBtn = styled.button`
    display: flex;
    align-items: center;
    justify-content: center;
    flex: none;
    width: 20px;
    height: 18px;
`

const DropBtn = styled.button`
    display: flex;
    align-items: center;
    justify-content: center;
    width: 10px;
    height: 18px;
`

const Divider = styled.i`
    width: 1px;
    height: 18px;
    margin: 0px 0px 0px 1px;
    background-color: #c5c1af;
`

const ComboBox = styled.div`
    display: flex;
    align-items: center;
    width: ${({ $width }) => $width}px;
    height: 19px;
    margin-left: 2px;
    padding-left: 3px;
    border: 1px solid #c9c5b2;

    select{
        flex: 1;
        min-width: 0;
        padding-left: 1px;
        appearance: none;
        font-size: 9px;
        line-height: 14px;
        color: #a5a290;
    }

    svg{
        flex: none;
    }
`

const Arrow = styled.span`
    display: flex;
    align-items: center;
    justify-content: center;
    width: 14px;
    height: 16px;
    border: 1px solid #fbfaf5;
    background-color: #f2f0e5;
    pointer-events: none;
`

const Workspace = styled.section`
    display: flex;
    flex: 1;
    min-height: 0;
    border-top: 2px solid #98958a;
`

const SideColumn = styled.aside`
    flex: none;
    width: ${({ $right }) => $right ? 15 : 22}px;
    margin-left: ${({ $right }) => $right ? 2 : 0}px;
    padding-left: ${({ $right }) => $right ? 1 : 0}px;
`

const SideBar = styled.div`
    padding-bottom: 2px;
    border-bottom: 1px solid #aca899;
`

const SideTools = styled.div`
    display: flex;
    flex-direction: column;
    height: ${({ $height }) => $height}px;

    button{
        flex: 1;
        min-height: 0;
    }
`

const StyledModelSpace = styled.div`
    display: flex;
    flex: 1;
    flex-direction: column;
    min-width: 0;
    border-left: 2px solid #8e8b7d;
    border-right: 1px solid #fff;
    border-bottom: 1px solid #fff;
`

const Drawing = styled.div`
    position: relative;
    flex: 1;
    background-color: #000;
`

const PickBox = styled.div`
    position: absolute;
    left: 359px;
    top: 66px;
    width: 15px;
    height: 15px;
    border: 1px solid #e8e8e8;
`

const UcsIcon = styled.svg`
    position: absolute;
    left: 0px;
    bottom: 0px;
`

const TabBar = styled.div`
    display: flex;
    flex: none;
    height: 14px;
    padding-bottom: 2px;
`

const NavBtn = styled.button`
    display: flex;
    align-items: center;
    justify-content: center;
    width: 16px;
    height: 12px;
    border-right: 1px solid #c9c5b2;
`

const SlashMark = styled.svg`
    flex: none;
`

const TabBtn = styled.button`
    height: 12px;
    padding: 0px 3px 0px 4px;
    border-bottom: 1px solid #333;
    font-size: 10px;
    line-height: 11px;

    ${({ $active }) => $active && css`
        margin: 0px -4px;
        padding: 0px 6px;
        background-color: #000;
        color: #fff;
        clip-path: polygon(0 0, 100% 0, calc(100% - 4px) 100%, 4px 100%);
    `}
`

const StyledCommandPanel = styled.section`
    display: flex;
    flex: none;
    height: 51px;
    margin-top: 2px;
    padding: 8px 0px 4px 5px;
    border-top: 2px solid #4b4a45;
    border-bottom: 2px solid #c5c1af;

    & > div:first-child{
        height: 36px;
        margin-right: 3px;
    }
`

const CommandBox = styled.div`
    flex: 1;
    border-top: 2px solid #45463f;
    border-left: 2px solid #66675e;
    background-color: #cde8cf;
    font-size: 11px;

    span{
        font-size: 13px;
    }
`

const History = styled.div`
    display: flex;
    height: 19px;
    border-bottom: 1px solid #a9b5a5;

    p{
        flex: 1;
        line-height: 14px;
    }
`

const Prompt = styled.div`
    display: flex;
    height: 16px;

    label{
        line-height: 14px;
    }

    input{
        flex: 1;
        outline: none;
    }
`

const Scroller = styled.div`
    display: flex;
    flex-direction: column;
    width: 13px;
    margin-right: 1px;
    background-color: #eef0fb;
`

const HScroller = styled.div`
    display: flex;
    width: 72px;
    padding-right: 14px;
    background-color: #ece9d8;

    button:nth-child(2){
        flex: 2;
    }
`

const ScrollBtn = styled.button`
    display: flex;
    flex: 1;
    align-items: center;
    justify-content: center;
    border: 1px solid #eef3ff;
    border-radius: 2px;
    background-color: #c3d1f9;
`

const StyledStatusBar = styled.footer`
    display: flex;
    gap: 3px;
    flex: none;
    height: 13px;
    padding: 1px 9px 0px 5px;

    & > svg{
        flex: none;
        margin: 1px 3px 0px;
    }

    & > svg:nth-last-child(2){
        margin-top: 8px;
    }
`

const Coords = styled.output`
    width: 158px;
    height: 12px;
    border: 1px solid #aca899;
    border-bottom: none;
    font-family: "Liberation Sans", sans-serif;
    font-size: 11px;
    line-height: 11px;
`

const ModeBtn = styled.button`
    flex: none;
    height: 12px;
    padding: 0px 1px;
    border: 1px solid ${({ $on }) => $on ? "#55534a" : "#fbfaf4"};
    border-right-color: ${({ $on }) => $on ? "#fff" : "#aca899"};
    border-bottom: none;
    font-size: 10px;
    font-weight: 500;
    line-height: 11px;
`

const Tray = styled.div`
    display: flex;
    flex: none;
    gap: 2px;
    height: 18px;
    margin-left: auto;
    border: 1px solid #c9c5b2;
`

const StyledWatermark = styled.div`
    position: absolute;
    right: 11px;
    bottom: 10px;
    display: flex;
    align-items: center;
    gap: 11px;
    font-family: "Noto Sans CJK SC", sans-serif;
    color: #fff;
    text-shadow: 1px 1px 2px #77877a;
    pointer-events: none;

    span{
        width: 33px;
        height: 33px;
        border-radius: 50%;
        background-color: #fff;
        box-shadow: 1px 1px 2px #77877a;
        font-size: 23px;
        line-height: 32px;
        text-align: center;
        color: #9fb3a2;
        text-shadow: none;
    }

    p{
        font-size: 23px;
        font-weight: 500;
        line-height: 32px;
    }
`
